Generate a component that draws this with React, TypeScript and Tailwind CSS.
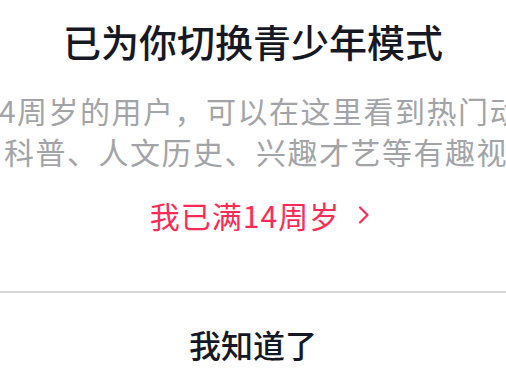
const font = { fontFamily: '"Noto Sans CJK SC", "Noto Sans", sans-serif' };

export default function App() {
  return (
    <div style={font} className="w-[506px] h-[380px] bg-white overflow-hidden flex flex-col">
      <h1 className="shrink-0 pt-[17px] text-center text-[38px] leading-[48px] font-medium text-[#161823] whitespace-nowrap">
        已为你切换青少年模式
      </h1>

      {/* description runs wider than the dialog, clipped on both sides */}
      <div className="shrink-0 mt-[25px] flex flex-col items-center text-[30px] leading-[41px] tracking-[1.5px] text-[#a3a4a8] whitespace-nowrap">
        <p className="pl-[14px]">4周岁的用户，可以在这里看到热门动</p>
        <p className="pl-[6px]">科普、人文历史、兴趣才艺等有趣视</p>
      </div>

      <button className="shrink-0 mt-[23px] self-center pl-[14px] flex items-center gap-[18px] text-[30px] leading-[40px] tracking-[1px] text-[#fe2c55]">
        我已满14周岁
        <svg width="12" height="18" viewBox="0 0 12 18" fill="none" stroke="currentColor" strokeWidth="2.2" strokeLinecap="round" strokeLinejoin="round">
          <path d="M2 1.5 L9.5 9 L2 16.5" />
        </svg>
      </button>

      <div className="shrink-0 mt-[56px] h-[2px] bg-[#d6d6d8]" />

      <button className="shrink-0 h-[102px] text-center text-[32px] font-medium text-[#161823]">
        我知道了
      </button>
    </div>
  );
}
